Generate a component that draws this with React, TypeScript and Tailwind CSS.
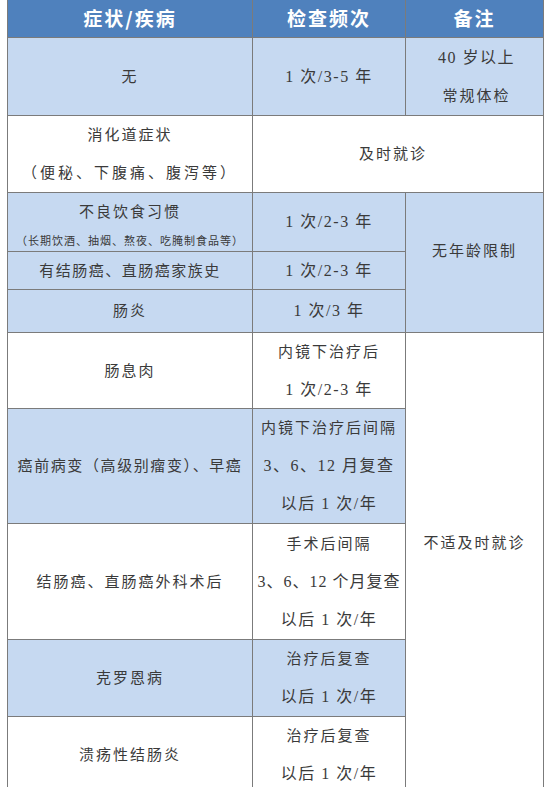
import type { ReactNode } from "react";

const body = "font-['Liberation_Serif','Noto_Sans_CJK_SC',serif] text-[15px] text-[#3a3a3a] tracking-[2px]";
// lines that mix latin digits with CJK run a touch larger in the reference
const num = "text-[16px] tracking-[1.5px]";

function Cell({
  children,
  tone = "white",
  className = "",
}: {
  children: ReactNode;
  tone?: "white" | "blue";
  className?: string;
}) {
  return (
    <div
      className={`flex flex-col items-center justify-center text-center whitespace-nowrap leading-[38px] ${
        tone === "blue" ? "bg-[#c6d9f1]" : "bg-white"
      } ${className}`}
    >
      {children}
    </div>
  );
}

function Head({ children }: { children: ReactNode }) {
  return (
    <div className="flex items-center justify-center bg-[#4f81bd] font-['Noto_Sans_CJK_SC',sans-serif] text-[19px] font-bold text-white">
      {children}
    </div>
  );
}

export default function App() {
  return (
    <div className="min-h-[787px] overflow-hidden bg-white pl-[7px]">
      <div
        className={`grid w-[537px] grid-cols-[244px_152px_137px] grid-rows-[37px_77px_76px_58px_37px_42px_75px_114px_115px_76px_76px] gap-px bg-[#7b7b7b] px-px pb-px ${body}`}
      >
        <Head>症状/疾病</Head>
        <Head>检查频次</Head>
        <Head>备注</Head>

        <Cell tone="blue">无</Cell>
        <Cell tone="blue" className={num}>1 次/3-5 年</Cell>
        <Cell tone="blue" className="pl-[4px]">
          <span className={num}>40 岁以上</span>
          <span>常规体检</span>
        </Cell>

        <Cell>
          <span>消化道症状</span>
          <span className="tracking-[3px]">（便秘、下腹痛、腹泻等）</span>
        </Cell>
        <Cell className="col-span-2 pr-[10px]">及时就诊</Cell>

        <Cell tone="blue" className="leading-[28px]">
          <span>不良饮食习惯</span>
          <span className="text-[11px] leading-[20px] tracking-[1px]">（长期饮酒、抽烟、熬夜、吃腌制食品等）</span>
        </Cell>
        <Cell tone="blue" className={num}>1 次/2-3 年</Cell>
        <Cell tone="blue" className="row-span-3 pb-[24px]">无年龄限制</Cell>

        <Cell tone="blue" className="tracking-[1.5px]">有结肠癌、直肠癌家族史</Cell>
        <Cell tone="blue" className={num}>1 次/2-3 年</Cell>

        <Cell tone="blue">肠炎</Cell>
        <Cell tone="blue" className={num}>1 次/3 年</Cell>

        <Cell>肠息肉</Cell>
        <Cell>
          <span>内镜下治疗后</span>
          <span className={num}>1 次/2-3 年</span>
        </Cell>
        <Cell className="row-span-5 pb-[40px]">不适及时就诊</Cell>

        <Cell tone="blue" className="tracking-[1.6px]">癌前病变（高级别瘤变）、早癌</Cell>
        <Cell tone="blue">
          <span>内镜下治疗后间隔</span>
          <span className={num}>3、6、12 月复查</span>
          <span className={num}>以后 1 次/年</span>
        </Cell>

        <Cell>结肠癌、直肠癌外科术后</Cell>
        <Cell>
          <span>手术后间隔</span>
          <span className="text-[16px] tracking-[1px]">3、6、12 个月复查</span>
          <span className={num}>以后 1 次/年</span>
        </Cell>

        <Cell tone="blue">克罗恩病</Cell>
        <Cell tone="blue">
          <span>治疗后复查</span>
          <span className={num}>以后 1 次/年</span>
        </Cell>

        <Cell>溃疡性结肠炎</Cell>
        <Cell>
          <span>治疗后复查</span>
          <span className={num}>以后 1 次/年</span>
        </Cell>
      </div>
    </div>
  );
}
